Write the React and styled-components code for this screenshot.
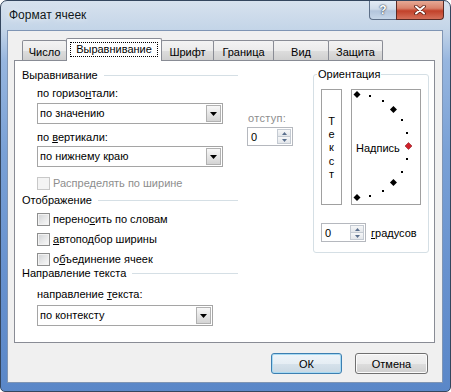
import React from "react";
import styled, { createGlobalStyle } from "styled-components";

const GlobalStyle = createGlobalStyle`
  html, body {
    margin: 0;
    padding: 0;
    background: #ffffff;
  }
  body {
    font-family: "Liberation Sans", Arial, sans-serif;
    font-size: 11px;
    color: #000;
  }
`;

const Window = styled.div`
  box-sizing: border-box;
  width: 451px;
  height: 392px;
  display: flex;
  flex-direction: column;
  padding: 0 7px 8px 6px;
  border: 1px solid #34465e;
  border-radius: 7px 7px 5px 5px;
  background: linear-gradient(
    180deg,
    #d7e2ee 0px,
    #c4d5e8 28px,
    #97b6df 60px,
    #7aa1d6 150px,
    #6892cf 270px,
    #5a87c8 392px
  );
`;

const TitleBar = styled.div`
  height: 29px;
  display: flex;
  justify-content: space-between;
  align-items: flex-start;
  flex-shrink: 0;
`;

const Title = styled.div`
  padding: 7px 0 0 2px;
  font-size: 12px;
  line-height: 15px;
  color: #101820;
  text-shadow: 0 0 6px rgba(255, 255, 255, 0.9);
`;

const CaptionButtons = styled.div`
  display: flex;
  margin-right: -1px;
`;

const HelpButton = styled.div`
  box-sizing: border-box;
  width: 27px;
  height: 19px;
  display: flex;
  align-items: center;
  justify-content: center;
  border: 1px solid #5d6f88;
  border-top: none;
  border-right: none;
  border-radius: 0 0 0 4px;
  background: linear-gradient(180deg, #e3ebf4 0%, #cfdbe9 45%, #b3c5dc 55%, #c6d6e8 100%);
  color: #fff;
  font-weight: bold;
  font-size: 12px;
  text-shadow: 0 0 2px #2d3c52, 0 0 1px #2d3c52;
`;

const CloseButton = styled.div`
  box-sizing: border-box;
  width: 48px;
  height: 19px;
  display: flex;
  align-items: center;
  justify-content: center;
  border: 1px solid #5a2a24;
  border-top: none;
  border-radius: 0 0 4px 0;
  background: linear-gradient(180deg, #e6a995 0%, #d9826b 40%, #c2412a 55%, #d5705a 100%);
`;

const Client = styled.div`
  flex: 1;
  display: flex;
  flex-direction: column;
  background: #f0f0f0;
  border: 1px solid #7f95b4;
  padding: 7px 7px 0 6px;
`;

const TabStrip = styled.div`
  display: flex;
  align-items: flex-end;
  height: 22px;
  padding-left: 8px;
`;

const Tab = styled.div`
  box-sizing: border-box;
  width: ${(p) => p.$w}px;
  height: ${(p) => (p.$active ? 23 : 20)}px;
  margin-bottom: ${(p) => (p.$active ? -1 : 0)}px;
  margin-left: -1px;
  position: relative;
  z-index: ${(p) => (p.$active ? 1 : 0)};
  display: flex;
  align-items: center;
  justify-content: center;
  padding-top: ${(p) => (p.$active ? 0 : 2)}px;
  padding-bottom: ${(p) => (p.$active ? 1 : 0)}px;
  border: 1px solid #898c95;
  border-bottom: none;
  border-radius: 2px 2px 0 0;
  background: ${(p) =>
    p.$active
      ? "#ffffff"
      : "linear-gradient(180deg, #f3f3f3 0%, #ebebeb 50%, #dddddd 52%, #cfcfcf 100%)"};
  &:first-child {
    margin-left: 0;
  }
`;

const FocusText = styled.span`
  border: 1px dotted #000;
  padding: 0 5px;
  line-height: 13px;
`;

const Panel = styled.div`
  box-sizing: border-box;
  height: 283px;
  display: flex;
  align-items: flex-start;
  border: 1px solid #898c95;
  background: #ffffff;
  padding: 7px 0 0 7px;
`;

const LeftCol = styled.div`
  width: 216px;
  display: flex;
  flex-direction: column;
`;

const GroupHeader = styled.div`
  display: flex;
  align-items: center;
  height: 14px;
  line-height: 14px;
  margin-top: ${(p) => p.$mt || 0}px;
  &::after {
    content: "";
    flex: 1;
    height: 1px;
    margin-left: 6px;
    background: #d5dfe5;
  }
`;

const FieldLabel = styled.div`
  height: 14px;
  line-height: 14px;
  padding-left: 15px;
  margin-top: ${(p) => p.$mt || 0}px;
  color: ${(p) => (p.$disabled ? "#8d8d8d" : "#000")};
`;

const Select = styled.div`
  box-sizing: border-box;
  width: ${(p) => p.$w}px;
  height: 21px;
  margin: ${(p) => p.$mt || 0}px 0 0 15px;
  display: flex;
  align-items: stretch;
  border: 1px solid #a5a5a5;
  background: #fff;
`;

const SelectValue = styled.div`
  flex: 1;
  padding-left: 2px;
  line-height: 19px;
`;

const DropButton = styled.div`
  box-sizing: border-box;
  width: 15px;
  margin: 1px;
  display: flex;
  align-items: center;
  justify-content: center;
  border: 1px solid #b1b1b1;
  background: linear-gradient(180deg, #f8f8f8 0%, #e6e6e6 50%, #d4d4d4 100%);
`;

const CheckRow = styled.div`
  display: flex;
  align-items: center;
  gap: 3px;
  height: 13px;
  line-height: 13px;
  padding-left: 15px;
  margin-top: ${(p) => p.$mt || 0}px;
  color: ${(p) => (p.$disabled ? "#8d8d8d" : "#000")};
`;

const CheckBox = styled.span`
  box-sizing: border-box;
  width: 13px;
  height: 13px;
  flex-shrink: 0;
  border: 1px solid ${(p) => (p.$disabled ? "#c8c8c8" : "#8e8f8f")};
  box-shadow: inset 0 0 0 1px ${(p) => (p.$disabled ? "#f4f4f4" : "#f2f2f2")};
  background: ${(p) =>
    p.$disabled
      ? "#f4f4f4"
      : "linear-gradient(135deg, #cfd1d4 0%, #e6e7e8 50%, #fafafa 100%)"};
`;

const IndentCol = styled.div`
  margin: 43px 0 0 9px;
  display: flex;
  flex-direction: column;
  gap: 2px;
`;

const MutedLabel = styled.div`
  height: 14px;
  line-height: 14px;
  padding-left: 1px;
  color: #8d8d8d;
  letter-spacing: 0.3px;
`;

const Spin = styled.div`
  box-sizing: border-box;
  width: ${(p) => p.$w}px;
  height: ${(p) => p.$h}px;
  display: flex;
  border: 1px solid #b5b8be;
  background: #fff;
`;

const SpinValue = styled.div`
  flex: 1;
  padding-left: 3px;
  display: flex;
  align-items: center;
`;

const SpinButtons = styled.div`
  width: 14px;
  margin: 1px;
  display: flex;
  flex-direction: column;
`;

const SpinHalf = styled.div`
  flex: 1;
  display: flex;
  align-items: center;
  justify-content: center;
  border: 1px solid #c4cad2;
  border-top-width: ${(p) => (p.$down ? 0 : 1)}px;
  background: linear-gradient(180deg, #f6f7f8 0%, #e3e6ea 100%);
`;

const OrientBox = styled.div`
  box-sizing: border-box;
  position: relative;
  width: 116px;
  height: 179px;
  margin: 6px 0 0 20px;
  padding: 14px 0 0 7px;
  border: 1px solid #d5dfe5;
  border-radius: 3px;
`;

const Legend = styled.span`
  position: absolute;
  top: -8px;
  left: 3px;
  padding: 0 1px;
  line-height: 14px;
  background: #fff;
`;

const OrientRow = styled.div`
  display: flex;
  gap: 9px;
  height: 116px;
`;

const VerticalText = styled.div`
  box-sizing: border-box;
  width: 21px;
  display: flex;
  flex-direction: column;
  align-items: center;
  justify-content: center;
  padding-top: 2px;
  border: 1px solid #a0a0a0;
  line-height: 13.3px;
`;

const ArcBox = styled.div`
  box-sizing: border-box;
  width: 70px;
  display: grid;
  border: 1px solid #a0a0a0;
  & > * {
    grid-area: 1 / 1;
  }
`;

const ArcLabel = styled.div`
  align-self: center;
  padding: 1px 0 0 4px;
  line-height: 14px;
`;

const DegreesRow = styled.div`
  display: flex;
  align-items: center;
  gap: 5px;
  margin-top: 18px;
`;

const ButtonRow = styled.div`
  display: flex;
  justify-content: flex-end;
  gap: 13px;
  margin-top: 10px;
  padding-right: 7px;
`;

const Button = styled.div`
  box-sizing: border-box;
  width: ${(p) => p.$w}px;
  height: 21px;
  display: flex;
  align-items: center;
  justify-content: center;
  border: 1px solid ${(p) => (p.$default ? "#3c7fb1" : "#707070")};
  border-radius: 3px;
  box-shadow: inset 0 0 0 1px ${(p) => (p.$default ? "#a8daf3" : "#fbfbfb")};
  background: ${(p) =>
    p.$default
      ? "linear-gradient(180deg, #eef5fa 0%, #e6eef4 50%, #d6e2eb 52%, #c9d8e3 100%)"
      : "linear-gradient(180deg, #f2f2f2 0%, #ebebeb 50%, #dddddd 52%, #cfcfcf 100%)"};
`;

function Triangle() {
  return (
    <svg width="7" height="4" viewBox="0 0 7 4">
      <polygon points="0,0 7,0 3.5,4" fill="#000" />
    </svg>
  );
}

function SpinArrow({ down }) {
  return (
    <svg width="5" height="3" viewBox="0 0 5 3">
      <polygon
        points={down ? "0,0 5,0 2.5,3" : "0,3 5,3 2.5,0"}
        fill="#5a6f8d"
      />
    </svg>
  );
}

function SpinField({ w, h, value }) {
  return (
    <Spin $w={w} $h={h}>
      <SpinValue>{value}</SpinValue>
      <SpinButtons>
        <SpinHalf>
          <SpinArrow />
        </SpinHalf>
        <SpinHalf $down>
          <SpinArrow down />
        </SpinHalf>
      </SpinButtons>
    </Spin>
  );
}

function CloseGlyph() {
  return (
    <svg width="12" height="10" viewBox="0 0 12 10">
      <path d="M2 1.5 L10 8.5 M10 1.5 L2 8.5" stroke="#5a1c12" strokeWidth="3.6" strokeLinecap="round" />
      <path d="M2 1.5 L10 8.5 M10 1.5 L2 8.5" stroke="#fff" strokeWidth="2" strokeLinecap="round" />
    </svg>
  );
}

function OrientationArc() {
  const cx = 5;
  const cy = 56;
  const r = 51.5;
  const marks = [];
  for (let a = 90; a >= -90; a -= 15) {
    const rad = (a * Math.PI) / 180;
    const x = cx + r * Math.cos(rad);
    const y = cy - r * Math.sin(rad);
    if (a === 0) {
      marks.push(
        <polygon
          key={a}
          points={`${x},${y - 3.5} ${x + 3.5},${y} ${x},${y + 3.5} ${x - 3.5},${y}`}
          fill="#d0212b"
          stroke="#7a1016"
          strokeWidth="0.5"
        />
      );
    } else if (a % 45 === 0) {
      marks.push(
        <polygon
          key={a}
          points={`${x},${y - 3.5} ${x + 3.5},${y} ${x},${y + 3.5} ${x - 3.5},${y}`}
          fill="#000"
        />
      );
    } else {
      marks.push(
        <rect key={a} x={Math.round(x) - 1} y={Math.round(y) - 1} width="2" height="2" fill="#000" />
      );
    }
  }
  return (
    <svg width="68" height="114" viewBox="0 0 68 114">
      {marks}
    </svg>
  );
}

export default function App() {
  const tabs = [
    { label: "Число", w: 45 },
    { label: "Выравнивание", w: 96, active: true },
    { label: "Шрифт", w: 53 },
    { label: "Граница", w: 61 },
    { label: "Вид", w: 56 },
    { label: "Защита", w: 55 },
  ];

  return (
    <>
      <GlobalStyle />
      <Window>
        <TitleBar>
          <Title>Формат ячеек</Title>
          <CaptionButtons>
            <HelpButton>?</HelpButton>
            <CloseButton>
              <CloseGlyph />
            </CloseButton>
          </CaptionButtons>
        </TitleBar>

        <Client>
          <TabStrip>
            {tabs.map((t) => (
              <Tab key={t.label} $w={t.w} $active={t.active}>
                {t.active ? <FocusText>{t.label}</FocusText> : t.label}
              </Tab>
            ))}
          </TabStrip>

          <Panel>
            <LeftCol>
              <GroupHeader>Выравнивание</GroupHeader>
              <FieldLabel $mt={4}>
                по горизо<u>н</u>тали:
              </FieldLabel>
              <Select $w={186} $mt={3}>
                <SelectValue>по значению</SelectValue>
                <DropButton>
                  <Triangle />
                </DropButton>
              </Select>
              <FieldLabel $mt={6}>
                по <u>в</u>ертикали:
              </FieldLabel>
              <Select $w={186} $mt={2}>
                <SelectValue>по нижнему краю</SelectValue>
                <DropButton>
                  <Triangle />
                </DropButton>
              </Select>
              <CheckRow $mt={10} $disabled>
                <CheckBox $disabled />
                Распределять по ширине
              </CheckRow>

              <GroupHeader $mt={3}>Отображение</GroupHeader>
              <CheckRow $mt={6}>
                <CheckBox />
                <span>
                  перено<u>с</u>ить по словам
                </span>
              </CheckRow>
              <CheckRow $mt={7}>
                <CheckBox />
                <span>
                  <u>а</u>втоподбор ширины
                </span>
              </CheckRow>
              <CheckRow $mt={7}>
                <CheckBox />
                <span>
                  о<u>б</u>ъединение ячеек
                </span>
              </CheckRow>

              <GroupHeader>Направление текста</GroupHeader>
              <FieldLabel $mt={7}>
                направление <u>т</u>екста:
              </FieldLabel>
              <Select $w={176} $mt={4}>
                <SelectValue>по контексту</SelectValue>
                <DropButton>
                  <Triangle />
                </DropButton>
              </Select>
            </LeftCol>

            <IndentCol>
              <MutedLabel>отступ:</MutedLabel>
              <SpinField w={46} h={19} value="0" />
            </IndentCol>

            <OrientBox>
              <Legend>Ориентация</Legend>
              <OrientRow>
                <VerticalText>
                  <span>Т</span>
                  <span>е</span>
                  <span>к</span>
                  <span>с</span>
                  <span>т</span>
                </VerticalText>
                <ArcBox>
                  <OrientationArc />
                  <ArcLabel>Надпись</ArcLabel>
                </ArcBox>
              </OrientRow>
              <DegreesRow>
                <SpinField w={45} h={19} value="0" />
                <span>
                  <u>г</u>радусов
                </span>
              </DegreesRow>
            </OrientBox>
          </Panel>

          <ButtonRow>
            <Button $w={71} $default>
              ОК
            </Button>
            <Button $w={73}>Отмена</Button>
          </ButtonRow>
        </Client>
      </Window>
    </>
  );
}
